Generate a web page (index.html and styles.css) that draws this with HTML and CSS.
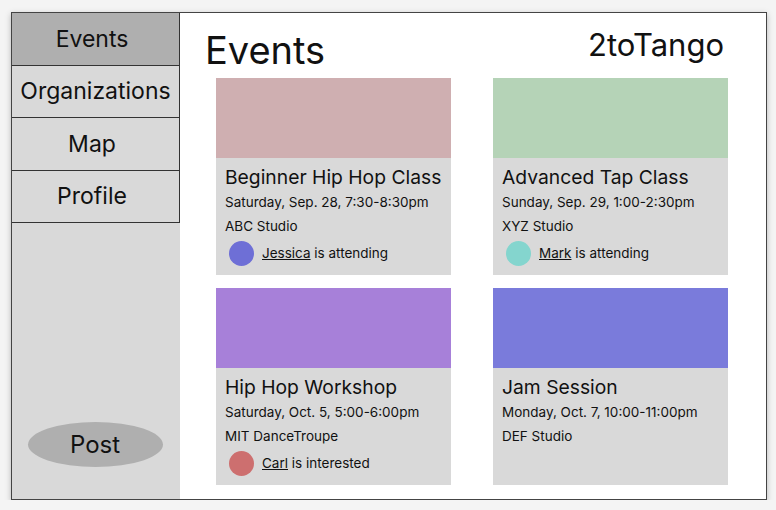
FILE: index.html
```html
<!DOCTYPE html>
<html lang="en">
<head>
  <meta charset="UTF-8" />
  <meta name="viewport" content="width=device-width, initial-scale=1.0"/>
  <title>2toTango - Events</title>
  <link rel="stylesheet" href="styles.css">
</head>
<body>

  <div class="frame">
    <aside class="sidebar">
      <nav class="nav">
        <div class="nav-item active">Events</div>
        <div class="nav-item wide">Organizations</div>
        <div class="nav-item">Map</div>
        <div class="nav-item">Profile</div>
      </nav>
      <button class="post-btn">Post</button>
    </aside>

    <main class="main">
      <header class="header">
        <h1 class="page-title">Events</h1>
        <div class="brand">2toTango</div>
      </header>

      <div class="grid">
        <div class="card">
          <div class="card-img pink"></div>
          <div class="card-body">
            <div class="card-title">Beginner Hip Hop Class</div>
            <div class="card-line">Saturday, Sep. 28, 7:30-8:30pm</div>
            <div class="card-line">ABC Studio</div>
            <div class="attend">
              <span class="avatar blue"></span>
              <span><u>Jessica</u> is attending</span>
            </div>
          </div>
        </div>

        <div class="card">
          <div class="card-img green"></div>
          <div class="card-body">
            <div class="card-title">Advanced Tap Class</div>
            <div class="card-line">Sunday, Sep. 29, 1:00-2:30pm</div>
            <div class="card-line">XYZ Studio</div>
            <div class="attend">
              <span class="avatar teal"></span>
              <span><u>Mark</u> is attending</span>
            </div>
          </div>
        </div>

        <div class="card">
          <div class="card-img purple"></div>
          <div class="card-body">
            <div class="card-title">Hip Hop Workshop</div>
            <div class="card-line">Saturday, Oct. 5, 5:00-6:00pm</div>
            <div class="card-line">MIT DanceTroupe</div>
            <div class="attend">
              <span class="avatar red"></span>
              <span><u>Carl</u> is interested</span>
            </div>
          </div>
        </div>

        <div class="card">
          <div class="card-img indigo"></div>
          <div class="card-body">
            <div class="card-title">Jam Session</div>
            <div class="card-line">Monday, Oct. 7, 10:00-11:00pm</div>
            <div class="card-line">DEF Studio</div>
          </div>
        </div>
      </div>
    </main>
  </div>

</body>
</html>
```

FILE: styles.css
```css
* {
  box-sizing: border-box;
  font-family: 'Inter', 'Noto Sans', sans-serif;
}

body {
  margin: 0;
  background: #f4f4f4;
  color: #111;
}

.frame {
  display: flex;
  width: 756px;
  height: 488px;
  margin: 12px 0 0 11px;
  border: 1px solid #444;
  background: #fff;
  box-shadow: 0 2px 6px rgba(0, 0, 0, 0.25);
}

/* sidebar */
.sidebar {
  width: 168px;
  background: #d9d9d9;
  display: flex;
  flex-direction: column;
  align-items: center;
}

.nav {
  width: 100%;
}

.nav-item {
  height: 52.5px;
  display: flex;
  align-items: center;
  justify-content: center;
  padding-right: 7px;
  font-size: 23px;
  border-right: 1.5px solid #333;
  border-bottom: 1.5px solid #333;
}

.nav-item.wide {
  padding-right: 0;
}

.nav-item.active {
  background: #afafaf;
}

.post-btn {
  margin-top: auto;
  margin-bottom: 32px;
  margin-right: 2px;
  width: 135px;
  height: 45px;
  border: none;
  border-radius: 50%;
  background: #afafaf;
  font-size: 24px;
  color: #111;
}

/* main area */
.main {
  flex: 1;
}

.header {
  display: flex;
  justify-content: space-between;
  align-items: flex-start;
  padding: 15px 42px 0 25px;
}

.page-title {
  margin: 3px 0 0;
  font-size: 38px;
  font-weight: 400;
  line-height: 38px;
}

.brand {
  margin-top: 1px;
  font-size: 31px;
  line-height: 31px;
}

.grid {
  display: grid;
  grid-template-columns: repeat(2, 235px);
  grid-template-rows: repeat(2, 197px);
  column-gap: 42px;
  row-gap: 13px;
  margin: 9px 0 0 36px;
}

.card {
  background: #d9d9d9;
}

.card-img {
  height: 80px;
}

.pink { background: #cfafb1; }
.green { background: #b5d3b7; }
.purple { background: #a780d9; }
.indigo { background: #7a7bdb; }

.card-body {
  padding: 7px 9px 0;
}

.card-title {
  margin-bottom: 1px;
  font-size: 19.3px;
  line-height: 24px;
}

.card-line {
  font-size: 13.5px;
  line-height: 24px;
}

.attend {
  display: flex;
  align-items: center;
  height: 26px;
  margin-top: 2px;
  padding-left: 4px;
  font-size: 13.5px;
}

.avatar {
  width: 25px;
  height: 25px;
  border-radius: 50%;
  margin-right: 8px;
}

.blue { background: #6e6fd6; }
.teal { background: #84d5ce; }
.red { background: #cd6f6f; }
```
